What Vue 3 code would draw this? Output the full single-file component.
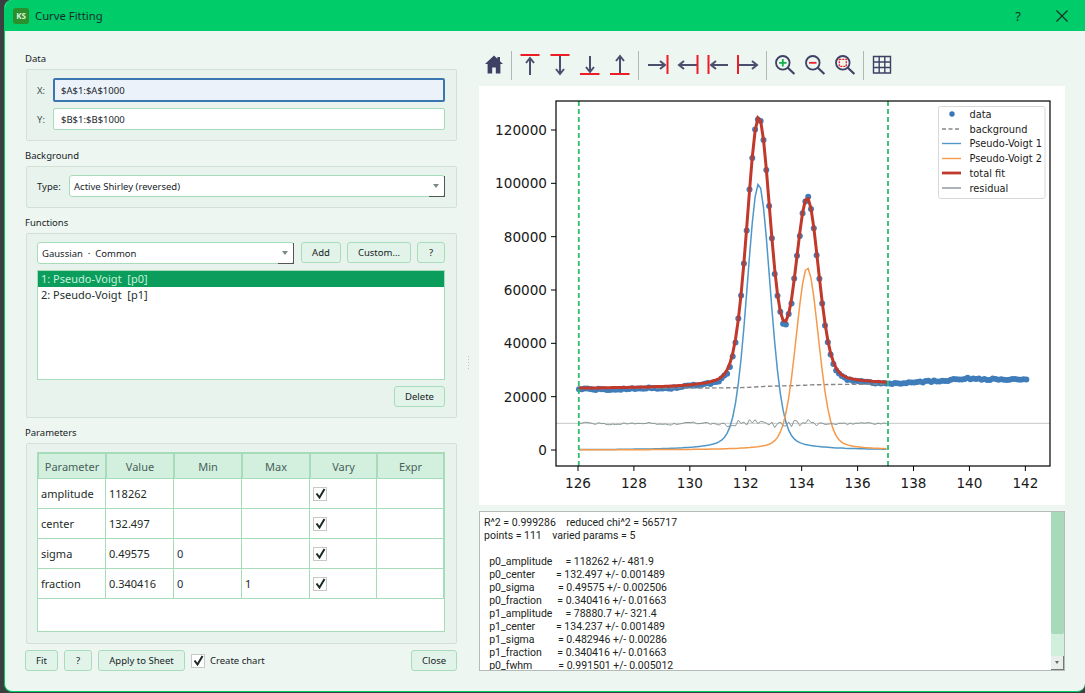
<script setup>
const X = v => 578 + (v - 126) * 27.96
const Y = v => 450 - v * 0.0026667
const rnd = i => { const s = Math.sin(i * 12.9898 + 4.1) * 43758.5453; return s - Math.floor(s) - 0.5 }
const pv = (x, A, c, s, f) => {
  const g = s / 1.17741
  const d = x - c
  return (1 - f) * A / (g * 2.50663) * Math.exp(-d * d / (2 * g * g)) + f * A / Math.PI * s / (d * d + s * s)
}
const p0 = x => pv(x, 118262, 132.497, 0.49575, 0.340416)
const p1 = x => pv(x, 78880.7, 134.237, 0.482946, 0.340416)

const xs = []
for (let i = 0; i <= 110; i++) xs.push(126.07 + i * 0.1)
let cum = 0
const cums = xs.map(x => { cum += p0(x) + p1(x); return cum })
const bg = xs.map((x, i) => 23000 + 1700 * (0.35 * (x - 126.07) / 11 + 0.65 * cums[i] / cum))
const total = xs.map((x, i) => p0(x) + p1(x) + bg[i])
const line = (arr, ys) => arr.map((x, i) => X(x).toFixed(1) + ',' + Y(ys[i]).toFixed(1)).join(' ')

const pathBg = line(xs, bg)
const pathP0 = line(xs, xs.map(p0))
const pathP1 = line(xs, xs.map(p1))
const pathTotal = line(xs, total)
const noise = xs.map((x, i) => {
  const big = x > 131.3 && x < 134.6
  return rnd(i) * (big ? 2600 : 800) + 250 * Math.sin(x * 3.1) - 100
})
const pathRes = line(xs, noise.map(n => 10000 + n))

const tailKnots = [[137.17, 24800], [138, 25500], [139, 25900], [139.5, 26600], [140, 26800], [141, 26500], [142.2, 26200]]
const tail = x => {
  for (let k = 1; k < tailKnots.length; k++) {
    if (x <= tailKnots[k][0]) {
      const [a, b] = tailKnots[k - 1]
      const [c, d] = tailKnots[k]
      return b + (d - b) * (x - a) / (c - a)
    }
  }
  return 26200
}
const dots = []
xs.forEach((x, i) => dots.push({ x: X(x).toFixed(1), y: Y(total[i] + noise[i] * 0.8 - 500).toFixed(1) }))
for (let i = 1; i <= 50; i++) {
  const x = 137.07 + i * 0.1
  dots.push({ x: X(x).toFixed(1), y: Y(tail(x) + rnd(i + 200) * 700).toFixed(1) })
}

const xTicks = [126, 128, 130, 132, 134, 136, 138, 140, 142].map(v => ({ v, x: X(v) }))
const yTicks = [0, 20000, 40000, 60000, 80000, 100000, 120000].map(v => ({ v, y: Y(v) }))
const legend = [
  { t: 'data', y: 114, dot: true },
  { t: 'background', y: 129, c: '#888', w: 1.3, dash: '4 2.5' },
  { t: 'Pseudo-Voigt 1', y: 143.5, c: '#4e97c8', w: 1.4 },
  { t: 'Pseudo-Voigt 2', y: 158.5, c: '#f5994a', w: 1.4 },
  { t: 'total fit', y: 173, c: '#c0392b', w: 2.8 },
  { t: 'residual', y: 188, c: '#7f8c8d', w: 1.3 }
]

const head = (x1, y1, x2, y2) => {
  const l = Math.hypot(x2 - x1, y2 - y1)
  const dx = (x2 - x1) / l
  const dy = (y2 - y1) / l
  const bx = x2 - dx * 5
  const by = y2 - dy * 5
  return `M${bx - dy * 4} ${by + dx * 4}L${x2} ${y2}L${bx + dy * 4} ${by - dx * 4}`
}
const mk = (bar, a) => ({ bar, shaft: `M${a[0]} ${a[1]}L${a[2]} ${a[3]}`, head: head(...a) })
const groupA = [
  mk([5.5, 5, 24.5, 5], [15, 25, 15, 8]),
  mk([5.5, 5, 24.5, 5], [15, 5, 15, 24]),
  mk([5, 24, 24.5, 24], [15, 6, 15, 22]),
  mk([5, 24, 24.5, 24], [15, 24, 15, 6])
]
const groupB = [
  mk([25.5, 5, 25.5, 24], [6, 15, 23, 15]),
  mk([25.5, 5, 25.5, 24], [25.5, 15, 7, 15]),
  mk([6.5, 5, 6.5, 24], [26, 15, 9, 15]),
  mk([6, 5, 6, 24], [6, 15, 25, 15])
]

const params = [
  { n: 'amplitude', v: '118262', min: '', max: '' },
  { n: 'center', v: '132.497', min: '', max: '' },
  { n: 'sigma', v: '0.49575', min: '0', max: '' },
  { n: 'fraction', v: '0.340416', min: '0', max: '1' }
]
const heads = ['Parameter', 'Value', 'Min', 'Max', 'Vary', 'Expr']
const comboText = 'Gaussian  ·  Common'
const fnItems = ['1: Pseudo-Voigt  [p0]', '2: Pseudo-Voigt  [p1]']
const report = `R^2 = 0.999286    reduced chi^2 = 565717
points = 111    varied params = 5

  p0_amplitude     = 118262 +/- 481.9
  p0_center        = 132.497 +/- 0.001489
  p0_sigma         = 0.49575 +/- 0.002506
  p0_fraction      = 0.340416 +/- 0.01663
  p1_amplitude     = 78880.7 +/- 321.4
  p1_center        = 134.237 +/- 0.001489
  p1_sigma         = 0.482946 +/- 0.00286
  p1_fraction      = 0.340416 +/- 0.01663
  p0_fwhm          = 0.991501 +/- 0.005012`
</script>

<template>
  <div class="screen">
    <div class="window">
      <header class="titlebar">
        <span class="logo">KS</span>
        <span class="title">Curve Fitting</span>
        <span class="help">?</span>
        <svg class="close-x" width="12" height="12" viewBox="0 0 12 12"><path d="M.5.5l11 11M11.5.5l-11 11" stroke="#1a2a24" stroke-width="1.1" fill="none" /></svg>
      </header>
      <div class="body">
        <section class="left">
          <div class="cap">Data</div>
          <div class="group g-data">
            <div class="frow">
              <label class="flabel lx">X:</label>
              <div class="input focus">$A$1:$A$1000</div>
            </div>
            <div class="frow">
              <label class="flabel lx">Y:</label>
              <div class="input plain">$B$1:$B$1000</div>
            </div>
          </div>
          <div class="cap next">Background</div>
          <div class="group g-bg">
            <div class="frow">
              <label class="flabel lt">Type:</label>
              <div class="combo grow"><span>Active Shirley (reversed)</span><i class="arrow"></i></div>
            </div>
          </div>
          <div class="cap next">Functions</div>
          <div class="group g-fn">
            <div class="fnrow">
              <div class="combo c-fn"><span>{{ comboText }}</span><i class="arrow"></i></div>
              <button class="btn b-add">Add</button>
              <button class="btn b-custom">Custom...</button>
              <button class="btn b-q">?</button>
            </div>
            <div class="list">
              <div class="item sel">{{ fnItems[0] }}</div>
              <div class="item">{{ fnItems[1] }}</div>
            </div>
            <div class="delrow"><button class="btn b-del">Delete</button></div>
          </div>
          <div class="cap next">Parameters</div>
          <div class="group g-par">
            <div class="table">
              <div v-for="h in heads" :key="h" class="th">{{ h }}</div>
              <template v-for="p in params" :key="p.n">
                <div class="td">{{ p.n }}</div>
                <div class="td">{{ p.v }}</div>
                <div class="td num">{{ p.min }}</div>
                <div class="td">{{ p.max }}</div>
                <div class="td"><span class="check"><svg width="11" height="11" viewBox="0 0 11 11"><path d="M1.5 5.500l3 4L9.500 1" stroke="#1c2b26" stroke-width="2" fill="none" /></svg></span></div>
                <div class="td"></div>
              </template>
            </div>
          </div>
          <div class="actions">
            <button class="btn b-fit">Fit</button>
            <button class="btn b-q2">?</button>
            <button class="btn b-apply">Apply to Sheet</button>
            <span class="check c2"><svg width="11" height="11" viewBox="0 0 11 11"><path d="M1.5 5.500l3 4L9.500 1" stroke="#1c2b26" stroke-width="2" fill="none" /></svg></span>
            <span class="chk-label">Create chart</span>
            <button class="btn b-close">Close</button>
          </div>
        </section>

        <div class="splitter"><i v-for="n in 5" :key="n"></i></div>

        <section class="right">
          <div class="toolbar">
            <svg class="ico" viewBox="0 0 30 30"><path d="M15 5.500L6 14h2.600v9.500h4.600v-6h3.600v6h4.600V14H24l-3-2.800V7h-2.600v1.800z" fill="#3d4164" /></svg>
            <i class="sep s1"></i>
            <svg v-for="(ic, n) in groupA" :key="'a' + n" class="ico" viewBox="0 0 30 30">
              <path :d="ic.shaft" stroke="#4b4e6d" stroke-width="2" fill="none" />
              <path :d="ic.head" stroke="#4b4e6d" stroke-width="2" fill="none" />
              <line :x1="ic.bar[0]" :y1="ic.bar[1]" :x2="ic.bar[2]" :y2="ic.bar[3]" stroke="#ee1c25" stroke-width="2" />
            </svg>
            <i class="sep"></i>
            <svg v-for="(ic, n) in groupB" :key="'b' + n" class="ico" viewBox="0 0 30 30">
              <path :d="ic.shaft" stroke="#4b4e6d" stroke-width="2" fill="none" />
              <path :d="ic.head" stroke="#4b4e6d" stroke-width="2" fill="none" />
              <line :x1="ic.bar[0]" :y1="ic.bar[1]" :x2="ic.bar[2]" :y2="ic.bar[3]" stroke="#ee1c25" stroke-width="2" />
            </svg>
            <i class="sep s3"></i>
            <svg class="ico" viewBox="0 0 30 30">
              <circle cx="12.800" cy="12.800" r="6.800" stroke="#3d4164" stroke-width="1.800" fill="none" />
              <path d="M17.800 17.800l6.600 6.200" stroke="#3d4164" stroke-width="2.200" fill="none" />
              <path d="M9.100 12.800h7.400M12.800 9.100v7.400" stroke="#12b04c" stroke-width="1.800" fill="none" />
            </svg>
            <svg class="ico" viewBox="0 0 30 30">
              <circle cx="12.800" cy="12.800" r="6.800" stroke="#3d4164" stroke-width="1.800" fill="none" />
              <path d="M17.800 17.800l6.600 6.200" stroke="#3d4164" stroke-width="2.200" fill="none" />
              <path d="M9.100 12.800h7.400" stroke="#ee1c25" stroke-width="1.800" fill="none" />
            </svg>
            <svg class="ico" viewBox="0 0 30 30">
              <circle cx="12.800" cy="12.800" r="6.800" stroke="#3d4164" stroke-width="1.800" fill="none" />
              <path d="M17.800 17.800l6.600 6.200" stroke="#3d4164" stroke-width="2.200" fill="none" />
              <rect x="9.300" y="9.300" width="7" height="7" stroke="#ee1c25" stroke-width="1.300" stroke-dasharray="2 1" fill="none" />
            </svg>
            <i class="sep"></i>
            <svg class="ico" viewBox="0 0 30 30">
              <path d="M6.500 6.500h17v16.500h-17zM12.200 6.500v16.500M17.800 6.500v16.500M6.500 12h17M6.500 17.500h17" stroke="#3d4164" stroke-width="1.400" fill="none" />
            </svg>
          </div>

          <svg class="chart" width="586" height="419" viewBox="479 86 586 419">
            <g font-family="'DejaVu Sans', sans-serif" font-size="13.6" fill="#1a1a1a">
              <line x1="556" x2="1050" :y1="Y(10000)" :y2="Y(10000)" stroke="#c8c8c8" stroke-width="1" />
              <g transform="translate(-1 0)">
                <circle v-for="(d, i) in dots" :key="i" :cx="d.x" :cy="d.y" r="3" fill="#3f7cba" />
                <polyline :points="pathBg" fill="none" stroke="#888" stroke-width="1.400" stroke-dasharray="4.500 2.500" />
                <polyline :points="pathP0" fill="none" stroke="#4e97c8" stroke-width="1.500" />
                <polyline :points="pathP1" fill="none" stroke="#f5994a" stroke-width="1.500" />
                <polyline :points="pathTotal" fill="none" stroke="#c0392b" stroke-width="3" />
                <polyline :points="pathRes" fill="none" stroke="#8a9696" stroke-width="1" />
              </g>
              <line v-for="x in [578.8, 888]" :key="x" :x1="x" :x2="x" y1="101" y2="466" stroke="#2ebd6e" stroke-width="1.800" stroke-dasharray="5 3" />
              <rect x="556" y="101" width="494" height="365" fill="none" stroke="#000" stroke-width="1.200" />
              <g v-for="t in xTicks" :key="t.v">
                <line :x1="t.x" :x2="t.x" y1="466" y2="471" stroke="#000" stroke-width="1" />
                <text :x="t.x" y="488" text-anchor="middle">{{ t.v }}</text>
              </g>
              <g v-for="t in yTicks" :key="t.v">
                <line x1="551" x2="556" :y1="t.y" :y2="t.y" stroke="#000" stroke-width="1" />
                <text x="547" :y="t.y + 5" text-anchor="end">{{ t.v }}</text>
              </g>
              <rect x="938.500" y="106.500" width="106.500" height="92" rx="2" fill="#fff" fill-opacity=".85" stroke="#d8d8d8" />
              <g v-for="l in legend" :key="l.t">
                <circle v-if="l.dot" cx="952" :cy="l.y" r="2.700" fill="#3a76b5" />
                <line v-else x1="942" x2="961" :y1="l.y" :y2="l.y" :stroke="l.c" :stroke-width="l.w" :stroke-dasharray="l.dash" />
                <text x="969.500" :y="l.y + 3.500" font-size="9.800">{{ l.t }}</text>
              </g>
            </g>
          </svg>

          <div class="output">
            <pre class="report">{{ report }}</pre>
            <div class="scroll">
              <div class="thumb"></div>
              <div class="sarrow"><i></i></div>
            </div>
          </div>
        </section>
      </div>
    </div>
  </div>
</template>

<style>
html, body { margin: 0; overflow: hidden; }
</style>

<style scoped>
.screen { width: 1085px; height: 693px; background: #3a3f40; overflow: hidden; font-family: "Noto Sans", "Open Sans", sans-serif; color: #17231f; }
.window { box-sizing: border-box; margin-left: 4px; width: 1081px; height: 692px; background: #eef6f1; border-left: 1px solid #00cc6a; border-bottom: 1px solid #00cc6a; border-radius: 8px 0 8px 8px; overflow: hidden; }
.titlebar { height: 31px; background: #00cc6a; display: flex; align-items: center; padding-left: 8px; }
.logo { width: 16px; height: 16px; border-radius: 3px; background: #2c8f2e; color: #d8f2d8; font: 700 8px/16px "Noto Sans", sans-serif; text-align: center; }
.title { margin-left: 6px; font-size: 11.3px; color: #15302a; }
.help { margin-left: auto; font-size: 13px; color: #15302a; }
.close-x { margin-left: 35px; margin-right: 17px; }
.body { display: flex; padding-top: 21px; }
.left { width: 432px; margin-left: 20px; }
.cap { height: 13px; line-height: 13px; font-size: 9.5px; margin-bottom: 4px; }
.cap.next { margin-top: 8px; }
.group { box-sizing: border-box; margin-left: 1px; background: #e9f3ed; border: 1px solid #d2e0d8; border-radius: 2px; padding: 8px 11px 0 10px; }
.g-data { height: 72px; display: flex; flex-direction: column; gap: 6px; }
.g-bg { height: 42px; }
.g-fn { height: 185px; }
.g-par { height: 201px; }
.frow { display: flex; align-items: center; }
.flabel { font-size: 9.5px; color: #3f4f48; }
.lx { width: 16px; flex: none; }
.lt { width: 32px; flex: none; color: #17231f; }
.input { box-sizing: border-box; flex: 1; font-size: 9.5px; border-radius: 2px; display: flex; align-items: center; padding-left: 7px; }
.focus { height: 24px; background: #ebf2fa; border: 2px solid #3a76b0; padding-left: 6px; }
.plain { height: 22px; background: #fff; border: 1px solid #a6dcba; }
.combo { box-sizing: border-box; height: 22px; background: #fff; border: 1px solid #a6dcba; border-radius: 3px; display: flex; align-items: center; justify-content: space-between; font-size: 9.5px; padding-left: 4px; position: relative; }
.combo span { white-space: pre; }
.grow { flex: 1; }
.arrow { position: relative; width: 16px; height: 21px; margin-right: -1px; box-sizing: border-box; border-right: 1px solid #555; border-bottom: 1px solid #555; }
.arrow::after { content: ""; position: absolute; left: 4px; top: 8px; border: 3px solid transparent; border-top: 4px solid #7c8883; border-bottom: 0; }
.fnrow { display: flex; height: 22px; align-items: flex-start; }
.c-fn { width: 257px; flex: none; }
.btn { box-sizing: border-box; padding: 0; height: 21px; background: #e2f3e9; border: 1px solid #a8ddbb; border-radius: 3px; font: 9.5px "Noto Sans", sans-serif; color: #17231f; flex: none; }
.b-add { width: 40px; margin-left: 7px; }
.b-custom { width: 64px; margin-left: 6px; }
.b-q { width: 28px; margin-left: 6px; }
.list { box-sizing: border-box; margin-top: 6px; height: 110px; background: #fff; border: 1px solid #a6dcba; font-size: 11px; }
.item { height: 16px; line-height: 16px; padding-left: 3px; white-space: pre; color: #22302b; }
.sel { background: #0a9d5b; color: #c6f0dd; }
.delrow { margin-top: 6px; display: flex; justify-content: flex-end; }
.b-del { width: 51px; }
.table { box-sizing: border-box; height: 180px; background: #fff; border: 1px solid #a6dcba; display: grid; grid-template-columns: 68px 68px 68px 68px 67px 67px; grid-auto-rows: 30px; grid-template-rows: 26px; align-content: start; }
.th { box-sizing: border-box; background: #d3f0df; border: 1px solid #a6dcba; font-size: 11px; color: #49605a; display: flex; align-items: center; justify-content: center; }
.td { box-sizing: border-box; border-right: 1px solid #a6dcba; border-bottom: 1px solid #a6dcba; font-size: 11px; color: #1c2b26; display: flex; align-items: center; padding-left: 3px; }
.num { color: #1c2b4a; }
.check { box-sizing: border-box; width: 14px; height: 14px; background: #fff; border: 1px solid #c8c8c8; display: inline-flex; align-items: center; justify-content: center; }
.actions { display: flex; align-items: center; margin-top: 6px; }
.b-fit { width: 33px; }
.b-q2 { width: 28px; margin-left: 6px; }
.b-apply { width: 87px; margin-left: 6px; }
.c2 { margin-left: 6px; }
.chk-label { margin-left: 5px; font-size: 9.5px; }
.b-close { width: 46px; margin-left: auto; }
.splitter { width: 22px; display: flex; flex-direction: column; align-items: center; gap: 2px; padding-top: 304px; flex: none; }
.splitter i { width: 1px; height: 1px; background: #b9c7c0; display: block; }
.right { width: 586px; flex: none; margin-top: -2px; }
.toolbar { display: flex; align-items: center; height: 30px; }
.ico { width: 30px; height: 30px; flex: none; display: block; }
.sep { display: block; width: 1px; height: 29px; background: #b0b8b4; margin: 0 3px; flex: none; }
.s1 { margin-left: 2px; }
.s3 { margin: 0 3px 0 4px; }
.chart { display: block; margin-top: 6px; background: #fff; }
.output { box-sizing: border-box; margin-top: 6px; height: 160px; background: #fff; border: 1px solid #b4bcb8; display: flex; }
.report { flex: 1; margin: 0; padding: 4px 0 0 4px; overflow: hidden; font: 10.5px/13px Roboto, "Noto Sans", sans-serif; color: #1b2522; white-space: pre; }
.scroll { width: 13px; background: #d0efdc; display: flex; flex-direction: column; justify-content: space-between; flex: none; }
.thumb { height: 122px; background: #a6dab8; border-radius: 0 0 2px 2px; }
.sarrow { box-sizing: border-box; height: 14px; background: #e8eeea; border-right: 1px solid #777; border-bottom: 1px solid #777; display: flex; align-items: center; justify-content: center; }
.sarrow i { border: 2px solid transparent; border-top: 3px solid #666; border-bottom: 0; display: block; }
</style>
